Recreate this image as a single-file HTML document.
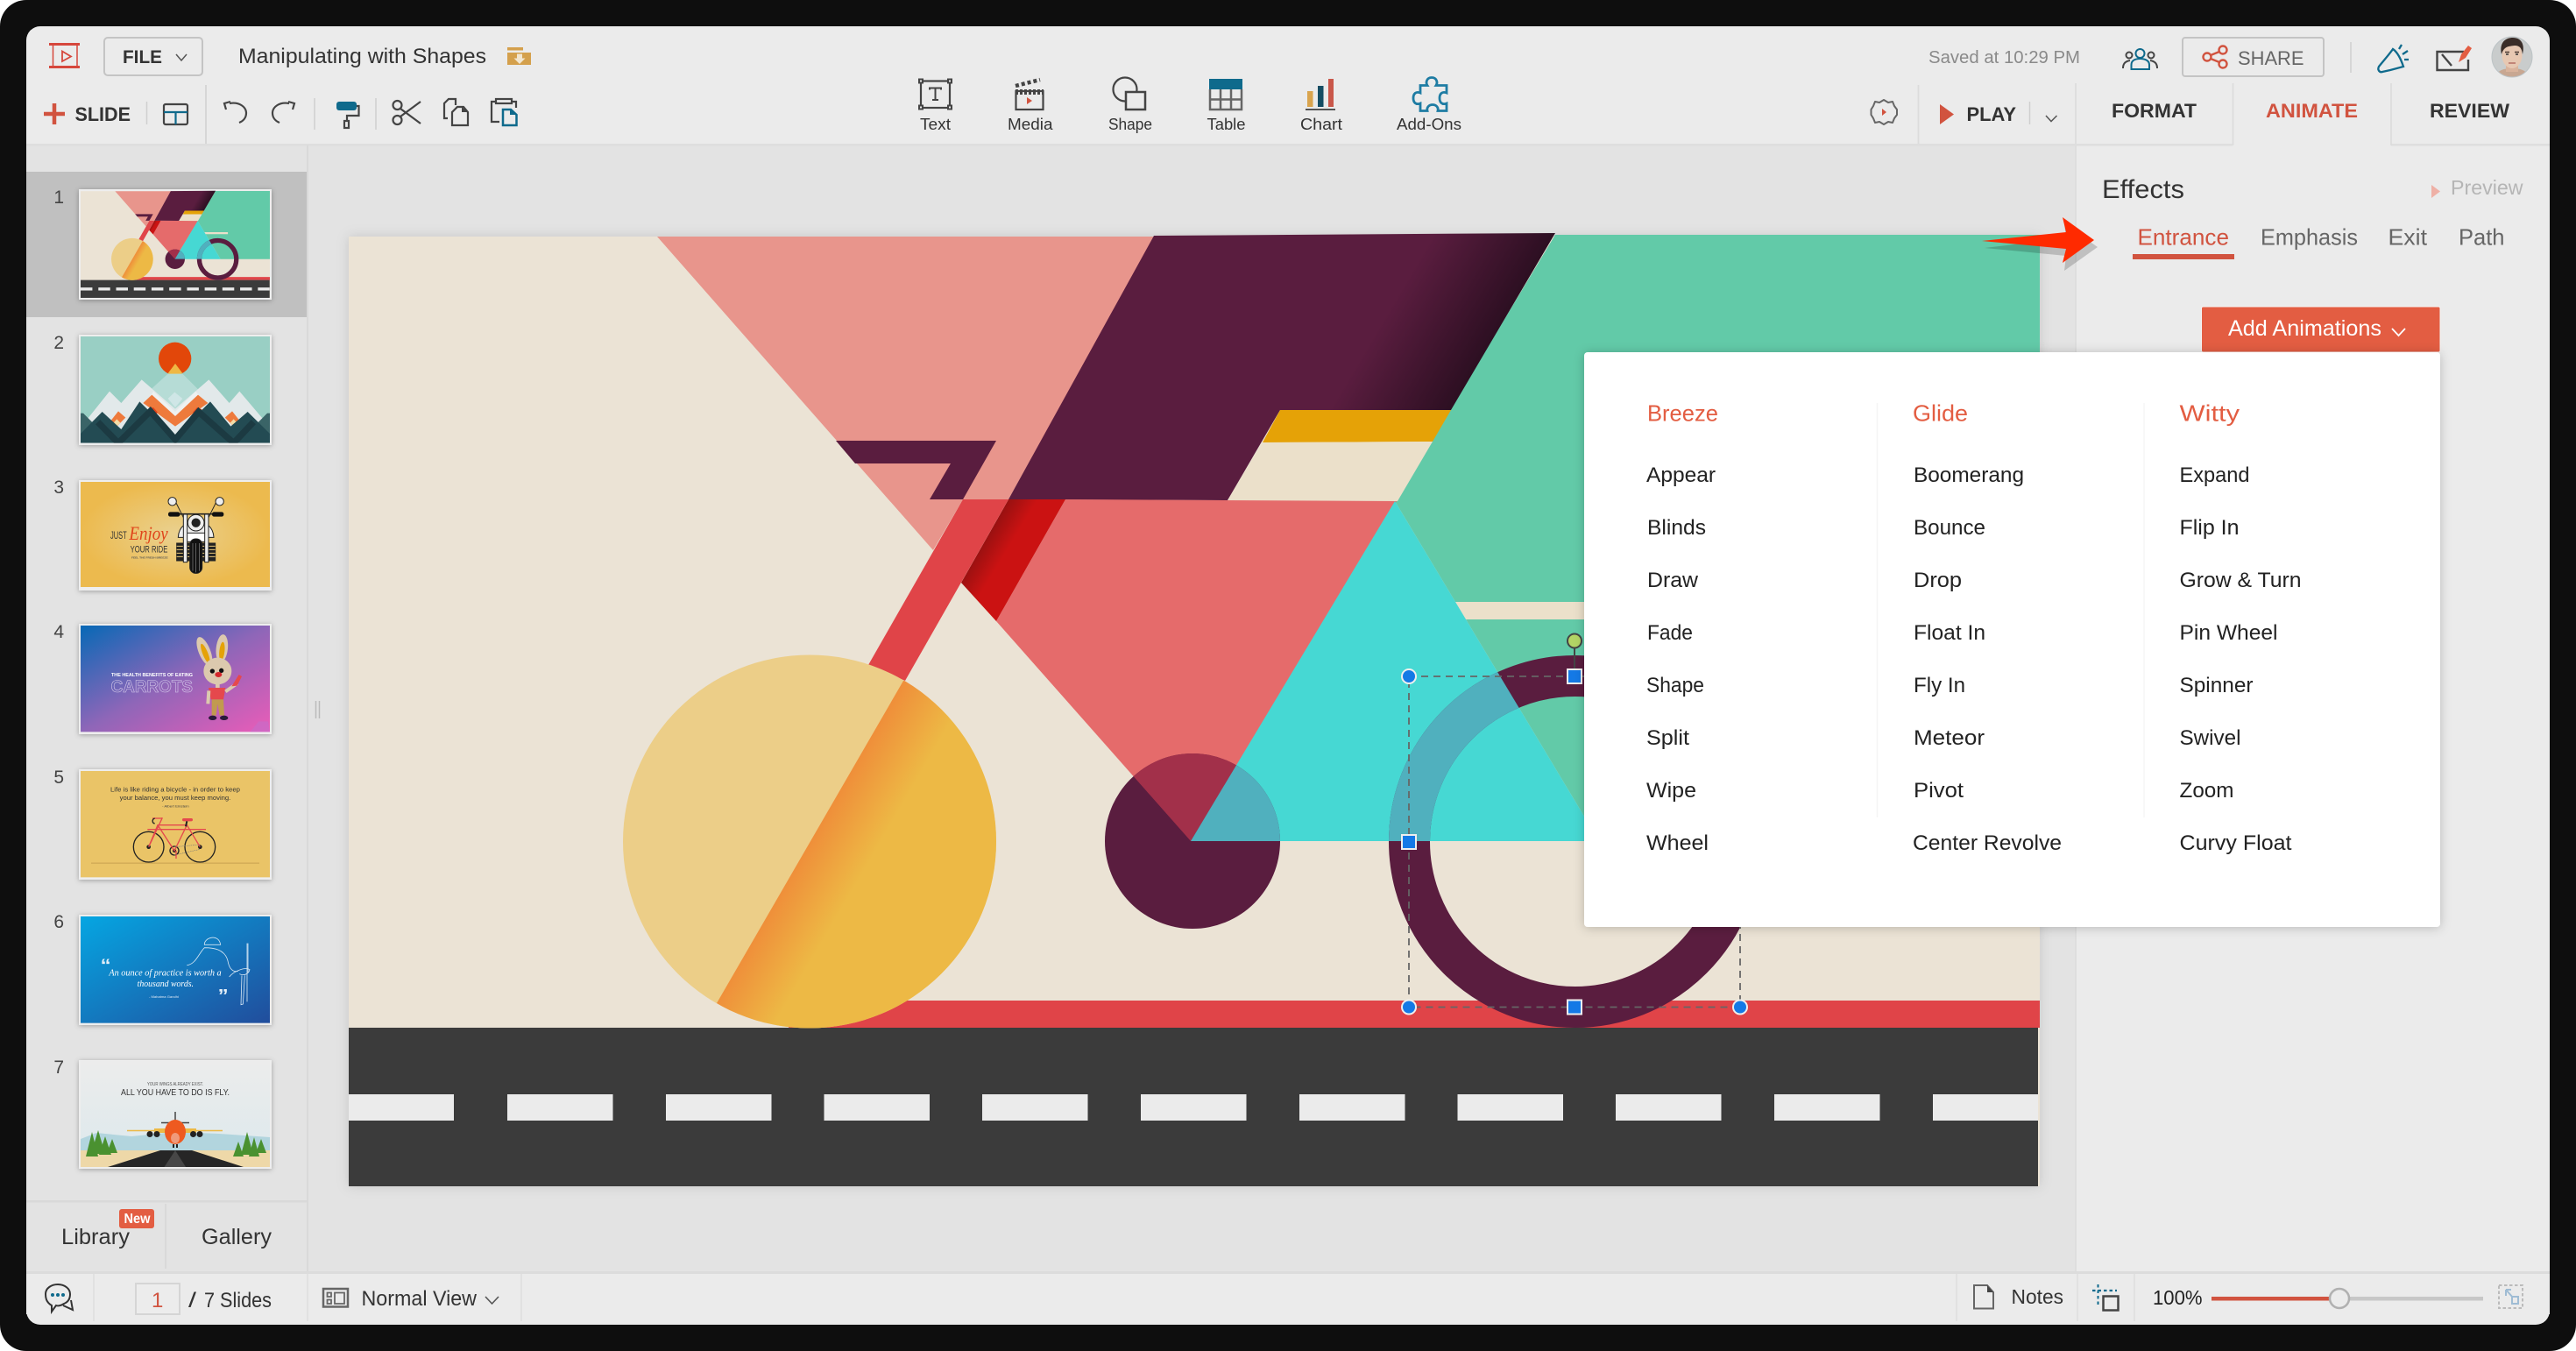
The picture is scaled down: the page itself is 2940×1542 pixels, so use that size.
<!DOCTYPE html>
<html lang="en"><head><meta charset="utf-8"><title>Manipulating with Shapes</title>
<style>
html,body{margin:0;padding:0;background:#fff}
svg{display:block}
text{font-family:"Liberation Sans",sans-serif;fill:#333}
.b{font-weight:700}
.i{font-size:24px;fill:#222}
.h{font-size:26px;fill:#e35d42}
.l{font-size:18px;fill:#333}
.ic{fill:none;stroke:#444;stroke-width:2.2}
</style></head><body>
<svg xmlns="http://www.w3.org/2000/svg" width="2940" height="1542" viewBox="0 0 2940 1542">
<defs>
<filter id="ss" x="-5%" y="-5%" width="110%" height="110%"><feDropShadow dx="0" dy="0" stdDeviation="7" flood-color="#000" flood-opacity=".13"/></filter>
<filter id="ts" x="-10%" y="-10%" width="120%" height="120%"><feDropShadow dx="0" dy="1" stdDeviation="3" flood-color="#000" flood-opacity=".3"/></filter>
<filter id="ps" x="-5%" y="-5%" width="110%" height="110%"><feDropShadow dx="0" dy="1" stdDeviation="6" flood-color="#000" flood-opacity=".22"/></filter>
<linearGradient id="gPlum" gradientUnits="userSpaceOnUse" x1="1635" y1="270" x2="1736" y2="330"><stop offset="0" stop-color="#5a1d3f"/><stop offset="1" stop-color="#2d0f22"/></linearGradient>
<linearGradient id="gRed" gradientUnits="userSpaceOnUse" x1="1097" y1="640" x2="1130" y2="660"><stop offset="0" stop-color="#861010"/><stop offset="1" stop-color="#cb1212"/></linearGradient>
<linearGradient id="gGold" gradientUnits="userSpaceOnUse" x1="925" y1="961" x2="985" y2="996"><stop offset="0" stop-color="#ef8f3a"/><stop offset="1" stop-color="#edb945"/></linearGradient>
<radialGradient id="g3"><stop offset="0" stop-color="#ead190"/><stop offset="1" stop-color="#ecba4e"/></radialGradient>
<linearGradient id="g4" x1="0" y1="0" x2="1" y2="1"><stop offset="0" stop-color="#0668b6"/><stop offset=".5" stop-color="#8e66b8"/><stop offset="1" stop-color="#ea5cb8"/></linearGradient>
<linearGradient id="g6" x1="0" y1="0" x2="1" y2="1"><stop offset="0" stop-color="#05a6e2"/><stop offset="1" stop-color="#214d9c"/></linearGradient>
<linearGradient id="g7" x1="0" y1="0" x2="0" y2="1"><stop offset="0" stop-color="#ececec"/><stop offset="1" stop-color="#dce9ed"/></linearGradient>
<clipPath id="cCy"><polygon points="1592,572 1359,960 1825,960"/></clipPath>
<clipPath id="cCo"><polygon points="1216,570 1594,572 1359,960 1137,709"/></clipPath>
<clipPath id="cBig"><circle cx="924" cy="960.5" r="213"/></clipPath>
<clipPath id="c2"><rect x="276" y="612" width="648" height="365"/></clipPath>
<clipPath id="cSun"><circle cx="599" cy="688" r="56"/></clipPath>
<clipPath id="cAv"><circle cx="2867" cy="65" r="23"/></clipPath>
<clipPath id="c7"><rect x="92" y="1211" width="216" height="121"/></clipPath>
<g id="art">
<rect x="398" y="270" width="1930" height="1084" fill="#ebe3d5"/>
<polygon points="1775,268 2328,268 2328,960 1825,960 1592,572" fill="#62caa8"/>
<polygon points="1640,687 1900,687 1900,707 1640,707" fill="#ebe0ca"/>
<polygon points="750,270 1318,270 1151,570 1099,570 1065,628" fill="#e8958c"/>
<polygon points="1317,269 1775,266 1656,468 1461,468 1401,571 1151,570" fill="url(#gPlum)"/>
<polygon points="1461,468 1656,468 1635,504 1441,505" fill="#e5a207"/>
<polygon points="1441,505 1635,504 1595,572 1401,571" fill="#ebe0ca"/>
<polygon points="954,503 1137,503 1099,570 1061,570 1085,529 976,529" fill="#5a1d3f"/>
<polygon points="1216,570 1594,572 1359,960 1137,709" fill="#e56b6b"/>
<polygon points="1151,570 1216,570 1137,709 1097,665" fill="url(#gRed)"/>
<polygon points="1099,570 1151,570 1033,777 991,759" fill="#e04448"/>
<polygon points="1592,572 1359,960 1825,960" fill="#46d8d3"/>
<rect x="900" y="1142" width="1428" height="31" fill="#e04448"/>
<rect x="398" y="1173" width="1928" height="181" fill="#3b3b3b"/>
<g fill="#ebebeb"><rect x="398" y="1249" width="120" height="30"/><rect x="579" y="1249" width="120.500" height="30"/><rect x="760" y="1249" width="120.500" height="30"/><rect x="940.500" y="1249" width="120.500" height="30"/><rect x="1121" y="1249" width="120.500" height="30"/><rect x="1302" y="1249" width="120.500" height="30"/><rect x="1483" y="1249" width="120.500" height="30"/><rect x="1663.500" y="1249" width="120.500" height="30"/><rect x="1844" y="1249" width="120.500" height="30"/><rect x="2025" y="1249" width="120.500" height="30"/><rect x="2206" y="1249" width="120" height="30"/></g>
<circle cx="924" cy="960.500" r="213" fill="#ecce88"/>
<polygon clip-path="url(#cBig)" points="1031,777 818,1145 1000,1250 1250,1100 1250,777" fill="url(#gGold)"/>
<circle cx="1361" cy="960" r="100" fill="#5a1d3f"/>
<circle cx="1361" cy="960" r="100" fill="#a2304a" clip-path="url(#cCo)"/>
<circle cx="1361" cy="960" r="100" fill="#50b0be" clip-path="url(#cCy)"/>
<circle cx="1797.500" cy="960.500" r="189" fill="none" stroke="#5a1d3f" stroke-width="47"/>
<circle cx="1797.500" cy="960.500" r="189" fill="none" stroke="#50b0be" stroke-width="47" clip-path="url(#cCy)"/>
</g>
</defs>

<rect width="2940" height="1542" rx="30" fill="#0e0e0e"/>
<rect x="30" y="30" width="2880" height="1482" rx="16" fill="#ebebeb"/>
<rect x="30" y="164" width="2339" height="1288" fill="#e3e3e3"/>
<rect x="30" y="164" width="2518" height="2.500" fill="#dedede"/>
<rect x="2729" y="164" width="181" height="2.500" fill="#dedede"/>
<rect x="2368" y="166" width="2" height="1286" fill="#dedede"/>
<rect x="350" y="166" width="2" height="1286" fill="#d9d9d9"/>
<rect x="30" y="1370" width="321" height="2.500" fill="#d9d9d9"/>
<rect x="30" y="1451" width="2880" height="3" fill="#dcdcdc"/>
<rect x="30" y="1454" width="2880" height="46" fill="#ebebeb"/>

<!-- header row -->
<g fill="none" stroke="#d6473c"><path d="M56 50.500H91M56 76.500H91" stroke-width="3"/><path d="M60.500 50V77M88 50V77" stroke-width="1.500"/><path d="M71 58.500L81 64.500L71 70Z" stroke-width="1.800"/></g>
<rect x="119" y="43" width="112" height="43" rx="4" fill="none" stroke="#c4c4c4" stroke-width="2"/>
<text class="b" x="140" y="72" font-size="21" textLength="45" lengthAdjust="spacingAndGlyphs">FILE</text>
<path d="M201 62L207 69L213 62" fill="none" stroke="#555" stroke-width="1.500"/>
<text x="272" y="72" font-size="24" textLength="283" lengthAdjust="spacingAndGlyphs">Manipulating with Shapes</text>
<path d="M579 54H597V57.500H579ZM579 60H606V74H579Z" fill="#d4a04c"/><path d="M590 61.500h6v5h3.500l-6.500 6.500-6.500-6.500h3.500z" fill="#f2e6cf"/>

<!-- second row left -->
<path d="M50 130H74M62 118V142" stroke="#d1533f" stroke-width="4.500"/>
<text class="b" x="85.500" y="138" font-size="22" textLength="63.500" lengthAdjust="spacingAndGlyphs">SLIDE</text>
<path d="M167.500 116V142M235 97V164M359 112V148M429 112V148" stroke="#cfcfcf" stroke-width="1.500"/>
<rect x="187" y="119" width="27" height="23" rx="2" class="ic" stroke-width="2.500"/>
<path d="M187 128H214M200.500 128V142" stroke="#0f6a8c" stroke-width="2.200"/>
<g class="ic"><path d="M262 118C273 116 281 122 281 129C281 134 278 138 273 140"/><path d="M263 116L256 118L258 125"/><path d="M330 118C319 116 311 122 311 129C311 134 314 138 319 140"/><path d="M329 116L336 118L334 125"/></g>
<rect x="384" y="116" width="23" height="10" rx="3" fill="#0f6a8c"/>
<path d="M407 121H409.500V132H396V138" class="ic"/><rect x="393" y="138" width="5" height="8" class="ic"/>
<g class="ic"><circle cx="453.500" cy="120" r="5"/><circle cx="453.500" cy="137" r="5"/><path d="M457 124L480 141M457 133L480 116"/></g>
<g class="ic"><path d="M511 135H507V118L512 113H520V120"/><path d="M522 122H529L534 128V143H516V128Z"/></g><path d="M527 122L534 128H527Z" fill="#444"/>
<g class="ic"><path d="M566 116H561V139H570"/><rect x="566" y="113" width="18" height="5"/><path d="M584 116H589V123"/></g>
<path d="M574 125H583L589.500 131V143H574Z" fill="#ebebeb" stroke="#0f6a8c" stroke-width="2.500"/><path d="M582 125L589 131H582Z" fill="#0f6a8c"/>

<!-- center tools -->
<g class="ic" stroke-width="2.500"><rect x="1051" y="92.500" width="33" height="30.500"/></g>
<g fill="#ebebeb" stroke="#444" stroke-width="2"><rect x="1049" y="90.500" width="4" height="4"/><rect x="1082" y="90.500" width="4" height="4"/><rect x="1049" y="120.500" width="4" height="4"/><rect x="1082" y="120.500" width="4" height="4"/></g>
<path d="M1061 102.500V100.500H1074V102.500M1067.500 100.500V114M1064 114H1071" fill="none" stroke="#444" stroke-width="2"/>
<text class="l" x="1050" y="148" textLength="35" lengthAdjust="spacingAndGlyphs">Text</text>
<rect x="1159.500" y="104" width="31" height="21" class="ic" stroke-width="2.500"/>
<path d="M1159 98L1187 91" stroke="#444" stroke-width="4.500" stroke-dasharray="4 3"/>
<path d="M1159 105H1191" stroke="#444" stroke-width="6" stroke-dasharray="3 2"/>
<polygon points="1172,111 1178,115 1172,119" fill="#d1533f"/>
<text class="l" x="1150" y="148" textLength="51.500" lengthAdjust="spacingAndGlyphs">Media</text>
<circle cx="1284" cy="102" r="13.500" class="ic" stroke-width="2.500"/>
<rect x="1285" y="105" width="22" height="20" fill="#ebebeb" stroke="#444" stroke-width="2.500"/>
<text class="l" x="1265" y="148" textLength="50" lengthAdjust="spacingAndGlyphs">Shape</text>
<rect x="1380" y="90" width="38" height="12" fill="#0f6a8c"/>
<path d="M1381 102V125H1417V102M1393 102V125M1405 102V125M1381 113.500H1417" fill="none" stroke="#666" stroke-width="2.500"/>
<text class="l" x="1377.500" y="148" textLength="44" lengthAdjust="spacingAndGlyphs">Table</text>
<rect x="1492" y="104" width="6.500" height="18" fill="#d9a44e"/><rect x="1504" y="98" width="6.500" height="24" fill="#154d63"/><rect x="1516" y="90" width="6" height="32" fill="#c9574a"/><rect x="1490" y="124" width="34" height="2" fill="#555"/>
<text class="l" x="1484" y="148" textLength="48" lengthAdjust="spacingAndGlyphs">Chart</text>
<path d="M1621 97.500H1629c-2-3-1-9 5-9s7 6 5 9H1651V106c-5-2-8 1-8 6s3 8 8 6V126.500H1641c1-4-2-7-6-7s-7 3-6 7H1621V118c-5 2-8-1-8-6s3-8 8-6Z" fill="none" stroke="#1e7ca3" stroke-width="2.800"/>
<text class="l" x="1594" y="148" textLength="74" lengthAdjust="spacingAndGlyphs">Add-Ons</text>

<!-- right header -->
<text x="2201" y="72" font-size="20" fill="#8a8a8a" style="fill:#8a8a8a" textLength="173" lengthAdjust="spacingAndGlyphs">Saved at 10:29 PM</text>
<g fill="none" stroke-width="2"><circle cx="2442.500" cy="61" r="5" stroke="#0f6a8c"/><path d="M2432.500 79H2453V74C2453 69 2448 67 2442.500 67C2437 67 2432.500 69 2432.500 74Z" stroke="#0f6a8c"/><circle cx="2430" cy="63" r="3.500" stroke="#444"/><circle cx="2455" cy="63" r="3.500" stroke="#444"/><path d="M2423 78C2423 72 2426 70 2431 69M2462 78C2462 72 2459 70 2454 69" stroke="#444"/></g>
<rect x="2491" y="43" width="161" height="44" rx="3" fill="none" stroke="#c4c4c4" stroke-width="2"/>
<g fill="none" stroke="#d1533f" stroke-width="2.400"><circle cx="2519" cy="65" r="4.500"/><circle cx="2537" cy="57" r="4.500"/><circle cx="2537" cy="73" r="4.500"/><path d="M2523 63L2533 59M2523 67L2533 71"/></g>
<text x="2554" y="74" font-size="22" style="fill:#666" textLength="75.500" lengthAdjust="spacingAndGlyphs">SHARE</text>
<path d="M2683 48V83" stroke="#cfcfcf" stroke-width="1.500"/>
<g fill="none" stroke="#0f6a8c" stroke-width="2.300"><path d="M2731 56C2727 62 2718 72 2715 76C2713 80 2716 83 2719 82L2728 80L2743 76C2741 70 2737 60 2731 56Z"/><path d="M2738 56L2741 51M2742 62L2748 58M2744 68L2749 68"/></g>
<path d="M2812 59H2781.500V80H2817V68M2787 62L2798 75" fill="none" stroke="#444" stroke-width="2.400"/>
<polygon points="2817,52 2821,55 2814,66 2806,71 2809,62" fill="#e35d42"/>
<g clip-path="url(#cAv)"><rect x="2844" y="42" width="46" height="46" fill="#c9cccc"/><path d="M2848 88C2850 80 2858 78 2867 78C2876 78 2884 80 2886 88Z" fill="#c8a792"/><rect x="2860" y="70" width="14" height="12" fill="#d9b39c"/><ellipse cx="2867" cy="63" rx="11.500" ry="15" fill="#e7c8b2"/><path d="M2855 62C2852 48 2860 43 2868 43C2877 43 2882 50 2879 62C2878 55 2876 52 2870 52C2864 53 2858 52 2855 62Z" fill="#3a2d28"/><path d="M2859 59.500h5M2870 59.500h5" stroke="#4a3a32" stroke-width="1.500"/><path d="M2860 62h3M2871 62h3" stroke="#333" stroke-width="1.600"/><path d="M2863 72h8" stroke="#b56f64" stroke-width="1.500"/></g>
<circle cx="2867" cy="65" r="23" fill="none" stroke="#bcc3c6" stroke-width="1"/>

<!-- second row right -->
<path d="M2150 114L2155 117L2160 116L2162 121L2165 125L2165 131L2162 135L2160 140L2155 139L2150 142L2145 139L2140 140L2138 135L2135.500 131L2135.500 125L2138 121L2140 116L2145 117Z" fill="none" stroke="#666" stroke-width="2" stroke-linejoin="round"/><polygon points="2148,124 2153,128 2148,132" fill="#d1533f"/>
<path d="M2189.500 97V164M2369 95V164M2548.500 95V166M2729 95V166" stroke="#dcdcdc" stroke-width="1.800"/>
<polygon points="2214,119 2230,130.500 2214,142" fill="#d1533f"/>
<text class="b" x="2244.500" y="138" font-size="22" textLength="56.500" lengthAdjust="spacingAndGlyphs">PLAY</text>
<path d="M2316.500 116V142" stroke="#cfcfcf" stroke-width="1.500"/>
<path d="M2335 132L2341 138.500L2347.500 132" fill="none" stroke="#555" stroke-width="1.500"/>
<text class="b" x="2410" y="134" font-size="22" textLength="97" lengthAdjust="spacingAndGlyphs">FORMAT</text>
<text class="b" x="2586" y="134" font-size="22" style="fill:#d1533f" textLength="105" lengthAdjust="spacingAndGlyphs">ANIMATE</text>
<text class="b" x="2773" y="134" font-size="22" textLength="91" lengthAdjust="spacingAndGlyphs">REVIEW</text>

<!-- effects panel -->
<text x="2399" y="226" font-size="30" textLength="94" lengthAdjust="spacingAndGlyphs">Effects</text>
<polygon points="2775,211 2785,218.500 2775,226" fill="#eeb0a6"/>
<text x="2797" y="222" font-size="23" style="fill:#b5b5b5" textLength="82.500" lengthAdjust="spacingAndGlyphs">Preview</text>
<text x="2439.500" y="279.500" font-size="26" style="fill:#d1533f" textLength="104.500" lengthAdjust="spacingAndGlyphs">Entrance</text>
<rect x="2434" y="290" width="116" height="6" fill="#d1533f"/>
<text x="2580" y="279.500" font-size="26" style="fill:#666" textLength="111" lengthAdjust="spacingAndGlyphs">Emphasis</text>
<text x="2725.500" y="279.500" font-size="26" style="fill:#666" textLength="44.500" lengthAdjust="spacingAndGlyphs">Exit</text>
<text x="2806" y="279.500" font-size="26" style="fill:#666" textLength="52.500" lengthAdjust="spacingAndGlyphs">Path</text>

<!-- slide -->
<rect x="398" y="270" width="1930" height="1084" fill="#000" filter="url(#ss)"/>
<use href="#art"/>
<path d="M360.500 800V820M364.500 800V820" stroke="#bbb" stroke-width="1.500"/>

<!-- selection -->
<rect x="1608" y="772" width="378" height="377.500" fill="none" stroke="#666" stroke-width="1.800" stroke-dasharray="8 6"/>
<path d="M1797 740V772" stroke="#444" stroke-width="2"/>
<circle cx="1797" cy="731.500" r="8" fill="#b3d465" stroke="#444" stroke-width="2"/>
<g fill="#1479e6" stroke="#eee" stroke-width="2"><circle cx="1608" cy="772" r="8"/><circle cx="1608" cy="1149.500" r="8"/><circle cx="1986" cy="1149.500" r="8"/><rect x="1789" y="764" width="16" height="16"/><rect x="1600" y="953" width="16" height="16"/><rect x="1789" y="1141.500" width="16" height="16"/></g>

<!-- arrow -->
<polygon points="2265,283 2358,272 2356,255 2394,282 2356,309 2358,292" fill="#000" opacity=".18"/>
<polygon points="2262,275 2358,265 2354,248 2390,274 2354,300 2358,284" fill="#ff2a00"/>

<!-- Add Animations -->
<rect x="2512.500" y="350" width="272.500" height="52" rx="2" fill="#e35d42" stroke="#f6f6f6" stroke-width="1"/>
<text x="2543" y="383" font-size="25" style="fill:#fff" textLength="175" lengthAdjust="spacingAndGlyphs">Add Animations</text>
<path d="M2730 375L2737.500 383L2745 375" fill="none" stroke="#fff" stroke-width="1.800"/>

<!-- popup -->
<rect x="1808" y="402" width="977" height="656" rx="4" fill="#fff" filter="url(#ps)"/>
<path d="M2142.500 460V933M2447 460V933" stroke="#f5f5f5" stroke-width="1.500"/>
<text class="h" x="1880" y="480.500" textLength="81" lengthAdjust="spacingAndGlyphs">Breeze</text>
<text class="h" x="2183" y="480.500" textLength="63" lengthAdjust="spacingAndGlyphs">Glide</text>
<text class="h" x="2487.500" y="480.500" textLength="68.500" lengthAdjust="spacingAndGlyphs">Witty</text>
<text class="i" x="1879" y="550" textLength="79" lengthAdjust="spacingAndGlyphs">Appear</text>
<text class="i" x="1880" y="610" textLength="67" lengthAdjust="spacingAndGlyphs">Blinds</text>
<text class="i" x="1880" y="670" textLength="58" lengthAdjust="spacingAndGlyphs">Draw</text>
<text class="i" x="1880" y="730" textLength="52" lengthAdjust="spacingAndGlyphs">Fade</text>
<text class="i" x="1879" y="790" textLength="66" lengthAdjust="spacingAndGlyphs">Shape</text>
<text class="i" x="1879" y="850" textLength="49" lengthAdjust="spacingAndGlyphs">Split</text>
<text class="i" x="1879" y="910" textLength="57" lengthAdjust="spacingAndGlyphs">Wipe</text>
<text class="i" x="1879" y="970" textLength="71" lengthAdjust="spacingAndGlyphs">Wheel</text>
<text class="i" x="2184" y="550" textLength="126" lengthAdjust="spacingAndGlyphs">Boomerang</text>
<text class="i" x="2184" y="610" textLength="82" lengthAdjust="spacingAndGlyphs">Bounce</text>
<text class="i" x="2184" y="670" textLength="55" lengthAdjust="spacingAndGlyphs">Drop</text>
<text class="i" x="2184" y="730" textLength="82" lengthAdjust="spacingAndGlyphs">Float In</text>
<text class="i" x="2184" y="790" textLength="59" lengthAdjust="spacingAndGlyphs">Fly In</text>
<text class="i" x="2184" y="850" textLength="81" lengthAdjust="spacingAndGlyphs">Meteor</text>
<text class="i" x="2184" y="910" textLength="57" lengthAdjust="spacingAndGlyphs">Pivot</text>
<text class="i" x="2183" y="970" textLength="170" lengthAdjust="spacingAndGlyphs">Center Revolve</text>
<text class="i" x="2487.500" y="550" textLength="80" lengthAdjust="spacingAndGlyphs">Expand</text>
<text class="i" x="2487.500" y="610" textLength="68" lengthAdjust="spacingAndGlyphs">Flip In</text>
<text class="i" x="2487.500" y="670" textLength="139" lengthAdjust="spacingAndGlyphs">Grow &amp; Turn</text>
<text class="i" x="2487.500" y="730" textLength="112" lengthAdjust="spacingAndGlyphs">Pin Wheel</text>
<text class="i" x="2487.500" y="790" textLength="84" lengthAdjust="spacingAndGlyphs">Spinner</text>
<text class="i" x="2487.500" y="850" textLength="70" lengthAdjust="spacingAndGlyphs">Swivel</text>
<text class="i" x="2487.500" y="910" textLength="62" lengthAdjust="spacingAndGlyphs">Zoom</text>
<text class="i" x="2487.500" y="970" textLength="128" lengthAdjust="spacingAndGlyphs">Curvy Float</text>

<!-- sidebar -->
<rect x="30" y="196" width="320" height="166" fill="#c0c0c0"/>
<g font-size="21" text-anchor="end" style="fill:#444">
<text x="73" y="232" style="fill:#444">1</text><text x="73" y="398" style="fill:#444">2</text><text x="73" y="563" style="fill:#444">3</text><text x="73" y="728" style="fill:#444">4</text><text x="73" y="894" style="fill:#444">5</text><text x="73" y="1059" style="fill:#444">6</text><text x="73" y="1225" style="fill:#444">7</text>
</g>
<g fill="#eee" filter="url(#ts)"><rect x="90" y="216" width="220" height="126"/><rect x="90" y="382" width="220" height="126"/><rect x="90" y="548" width="220" height="126"/><rect x="90" y="712" width="220" height="126"/><rect x="90" y="878" width="220" height="126"/><rect x="90" y="1044" width="220" height="126"/><rect x="90" y="1210" width="220" height="124"/></g>

<!-- thumb 1 -->
<g transform="translate(92,218) scale(.1119,.1123) translate(-398,-268)"><use href="#art"/></g>

<!-- thumb 2 -->
<g transform="translate(0,180) scale(.33333)">
<g clip-path="url(#c2)">
<rect x="276" y="612" width="648" height="365" fill="#99cfc4"/>
<circle cx="599" cy="688" r="56" fill="#e2470a"/>
<polygon clip-path="url(#cSun)" points="570,745 600,705 630,745" fill="#efb844"/>
<polygon points="520,790 575,740 625,740 685,800 600,860" fill="#b6dcd6"/>
<polygon points="295,900 375,800 415,840 485,760 600,860 715,760 785,840 820,800 905,900 905,977 295,977" fill="#e2e9ea"/>
<polygon points="525,800 600,870 670,800 690,825 600,900 510,825" fill="#eef1f1"/>
<polygon points="575,825 598,803 625,825 600,855" fill="#cfe6e6"/>
<polygon points="490,840 520,812 600,885 678,812 712,840 600,920" fill="#ee7a3c"/>
<polygon points="510,860 525,855 540,872 525,888" fill="#e0451b"/><polygon points="660,872 675,855 692,862 675,888" fill="#e0451b"/>
<polygon points="368,915 405,868 430,890 390,930" fill="#ee7a3c"/><polygon points="378,920 400,895 412,908 388,930" fill="#f4dca6"/>
<polygon points="770,890 795,868 832,915 810,930" fill="#ee7a3c"/><polygon points="788,908 800,895 822,920 812,930" fill="#f4dca6"/>
<polygon points="276,875 285,875 320,910 276,950" fill="#3a6467"/><polygon points="924,875 915,875 880,910 924,950" fill="#3a6467"/>
<polygon points="276,977 276,945 350,870 415,930 478,835 600,955 720,835 790,920 848,870 924,945 924,977" fill="#234b53"/>
<polyline points="335,905 405,977 515,868 600,965 680,870 800,977 868,905" fill="none" stroke="#1c3a42" stroke-width="22"/>
</g></g>

<!-- thumb 3 -->
<g transform="translate(0,180) scale(.33333)">
<rect x="276" y="1110" width="648" height="360" fill="url(#g3)"/>
<text x="378" y="1305" font-size="36" style="fill:#333" textLength="56" lengthAdjust="spacingAndGlyphs">JUST</text>
<text x="442" y="1308" font-size="66" font-style="italic" style="fill:#e0451b;font-family:'Liberation Serif',serif" textLength="133" lengthAdjust="spacingAndGlyphs">Enjoy</text>
<text x="446" y="1352" font-size="32" style="fill:#333" textLength="128" lengthAdjust="spacingAndGlyphs">YOUR RIDE</text>
<text x="450" y="1373" font-size="9" font-weight="700" style="fill:#555" textLength="125" lengthAdjust="spacingAndGlyphs">FEEL THE FRESH BREEZE</text>
<g stroke="#222" stroke-width="3">
<path d="M602 1180L632 1240M740 1180L710 1240" fill="none"/><circle cx="590" cy="1177" r="14" fill="#eee"/><circle cx="752" cy="1177" r="14" fill="#eee"/>
<rect x="605" y="1320" width="132" height="60" fill="#222"/>
<path d="M605 1330h132M605 1342h132M605 1354h132M605 1366h132" stroke="#e8c678" stroke-width="3"/>
<path d="M610 1300C612 1262 640 1245 671 1245C702 1245 730 1262 732 1300Z" fill="#eee"/>
<rect x="640" y="1285" width="62" height="30" fill="#fff"/>
<rect x="650" y="1305" width="42" height="118" rx="20" fill="#111"/>
<path d="M660 1320V1415M671 1320V1420M682 1320V1415" stroke="#888" stroke-width="2"/>
<rect x="628" y="1220" width="13" height="165" fill="#eee"/><rect x="701" y="1220" width="13" height="165" fill="#eee"/>
<circle cx="671" cy="1250" r="28" fill="#eee"/><circle cx="671" cy="1250" r="14" fill="#222"/>
<path d="M590 1220H740" stroke-width="5"/>
</g>
<rect x="576" y="1213" width="40" height="16" rx="7" fill="#111"/><rect x="726" y="1213" width="40" height="16" rx="7" fill="#111"/>
</g>

<!-- thumb 4 -->
<g transform="translate(0,680) scale(.33333)">
<rect x="276" y="102" width="648" height="364" fill="url(#g4)"/>
<text x="381" y="276" font-size="17" font-weight="700" style="fill:#fff" textLength="279" lengthAdjust="spacingAndGlyphs">THE HEALTH BENEFITS OF EATING</text>
<text x="380" y="330" font-size="58" font-weight="700" style="fill:none;stroke:#d5c8ea;stroke-width:1.800" textLength="280" lengthAdjust="spacingAndGlyphs">CARROTS</text>
<ellipse cx="700" cy="190" rx="20" ry="52" fill="#dcc9ae" transform="rotate(-22 700 190)"/><ellipse cx="760" cy="180" rx="20" ry="48" fill="#dcc9ae" transform="rotate(6 760 180)"/>
<ellipse cx="703" cy="198" rx="9" ry="36" fill="#e5a207" transform="rotate(-22 703 198)"/><ellipse cx="760" cy="190" rx="9" ry="32" fill="#e5a207" transform="rotate(6 760 190)"/>
<ellipse cx="745" cy="258" rx="48" ry="46" fill="#dcc9ae"/>
<circle cx="727" cy="258" r="8" fill="#111"/><circle cx="758" cy="256" r="8" fill="#111"/><ellipse cx="748" cy="270" rx="12" ry="9" fill="#d3272c"/>
<rect x="738" y="295" width="14" height="25" fill="#dcc9ae"/>
<path d="M714 315H772L765 355H722Z" fill="#e5484d"/>
<path d="M725 355H765L768 410H752L745 370L740 410H725Z" fill="#c19a4f"/>
<ellipse cx="728" cy="418" rx="14" ry="8" fill="#2a1a3a"/><ellipse cx="767" cy="418" rx="14" ry="8" fill="#2a1a3a"/>
<path d="M772 328L812 300" stroke="#dcc9ae" stroke-width="12"/>
<path d="M793 310L818 270L828 276L812 308Z" fill="#e5484d"/>
<path d="M715 325L712 370" stroke="#dcc9ae" stroke-width="12"/>
<polygon points="856,466 886,430 918,430 924,466" fill="#c86cc8" opacity=".7"/>
</g>

<!-- thumb 5 -->
<g transform="translate(0,680) scale(.33333)">
<rect x="276" y="600" width="648" height="364" fill="#eac467"/>
<text x="378" y="671" font-size="21" style="fill:#333" textLength="444" lengthAdjust="spacingAndGlyphs">Life is like riding a bicycle - in order to keep</text>
<text x="410" y="699" font-size="21" style="fill:#333" textLength="380" lengthAdjust="spacingAndGlyphs">your balance, you must keep moving.</text>
<text x="555" y="725" font-size="10" style="fill:#444" textLength="92" lengthAdjust="spacingAndGlyphs">- Albert Einstein</text>
<path d="M312 915.500H888" stroke="#c8a050" stroke-width="3"/>
<g fill="none" stroke="#222" stroke-width="4"><circle cx="509" cy="860" r="52"/><circle cx="685" cy="860" r="52"/><circle cx="597" cy="873" r="15"/></g>
<circle cx="509" cy="860" r="7" fill="#222"/><circle cx="685" cy="860" r="7" fill="#222"/><circle cx="597" cy="873" r="6" fill="#222"/>
<g fill="none" stroke="#e5484d" stroke-width="4"><path d="M509 860L540 785H640L597 873L540 785M640 785L685 860M556 760L509 860M505 800H705M603 873V900"/><path d="M522 762H556"/></g>
<rect x="624" y="762" width="36" height="10" rx="5" fill="#e5484d"/><path d="M640 772L636 790" stroke="#222" stroke-width="6"/>
<path d="M530 762C520 765 520 778 530 780" fill="none" stroke="#222" stroke-width="4"/>
<path d="M597 860L685 852M597 888L685 868" stroke="#777" stroke-width="2" stroke-dasharray="4 3"/>
</g>

<!-- thumb 6 -->
<g transform="translate(0,680) scale(.33333)">
<rect x="276" y="1098" width="648" height="365" fill="url(#g6)"/>
<text x="344" y="1286" font-size="60" font-weight="700" style="fill:#e6f0f8" textLength="36" lengthAdjust="spacingAndGlyphs">“</text>
<text x="746" y="1389" font-size="60" font-weight="700" style="fill:#e6f0f8" textLength="36" lengthAdjust="spacingAndGlyphs">”</text>
<g style="font-family:'Liberation Serif',serif" font-style="italic" font-size="30">
<text x="373" y="1300" style="fill:#fff;font-family:'Liberation Serif',serif" textLength="385" lengthAdjust="spacingAndGlyphs">An ounce of practice is worth a</text>
<text x="470" y="1338" style="fill:#fff;font-family:'Liberation Serif',serif" textLength="193" lengthAdjust="spacingAndGlyphs">thousand words.</text></g>
<text x="510" y="1377" font-size="10" style="fill:#dce8f4" textLength="102" lengthAdjust="spacingAndGlyphs">- Mahatma Gandhi</text>
<g fill="none" stroke="#d5e6f4" stroke-width="2.500"><path d="M700 1195C698 1170 750 1155 755 1195Z"/><path d="M640 1265C670 1262 680 1225 700 1205C730 1205 770 1210 780 1250C785 1280 800 1290 815 1285"/><path d="M846 1190V1390M849 1190V1290"/><path d="M828 1300L825 1400L832 1398L838 1300"/><path d="M785 1305C800 1285 840 1270 855 1280C850 1300 830 1300 820 1295"/></g>
</g>

<!-- thumb 7 -->
<g clip-path="url(#c7)">
<rect x="92" y="1211" width="216" height="121" fill="url(#g7)"/>
<text x="168" y="1239" font-size="5.500" style="fill:#555" textLength="64" lengthAdjust="spacingAndGlyphs">YOUR WINGS ALREADY EXIST.</text>
<text x="138" y="1250" font-size="10.500" style="fill:#333" textLength="124" lengthAdjust="spacingAndGlyphs">ALL YOU HAVE TO DO IS FLY.</text>
<path d="M92 1300L110 1293L150 1297L200 1292L250 1294L308 1298V1314H92Z" fill="#b2d5de"/>
<rect x="92" y="1313" width="216" height="19" fill="#eed8a8"/>
<polygon points="123,1332 278,1332 219,1313 183,1313" fill="#262626"/>
<polygon points="187.500,1332 212,1332 200,1313" fill="#474747"/>
<g fill="#4a9130"><polygon points="105,1320 98,1320 105,1292 112,1320"/><polygon points="112,1317 104,1317 112,1290 120,1317"/><polygon points="120,1318 113,1318 120,1297 127,1318"/><polygon points="128,1316 122,1316 128,1300 134,1316"/><polygon points="272,1320 266,1320 272,1303 278,1320"/><polygon points="282,1318 275,1318 282,1292 289,1318"/><polygon points="290,1320 284,1320 290,1298 296,1320"/><polygon points="298,1316 292,1316 298,1300 304,1316"/></g>
<path d="M145 1290.500H254" stroke="#edb945" stroke-width="1.500"/><rect x="176" y="1288" width="48" height="5" fill="#edb945"/>
<path d="M200 1269V1282M184 1281.500H216" stroke="#444" stroke-width="1.500"/>
<g fill="#222"><circle cx="171" cy="1294.500" r="3.500"/><circle cx="179" cy="1294.500" r="3.500"/><circle cx="220.500" cy="1294.500" r="3.500"/><circle cx="228" cy="1294.500" r="3.500"/><rect x="197" y="1306" width="2" height="4"/><rect x="201" y="1306" width="2" height="4"/></g>
<ellipse cx="200" cy="1292" rx="12" ry="14" fill="#ee5a20"/><ellipse cx="200" cy="1299" rx="5" ry="6" fill="#f09a7a"/>
</g>

<!-- sidebar bottom -->
<path d="M189 1374V1448" stroke="#d9d9d9" stroke-width="2"/>
<text x="70" y="1420" font-size="25" textLength="78" lengthAdjust="spacingAndGlyphs">Library</text>
<text x="230" y="1420" font-size="25" textLength="80" lengthAdjust="spacingAndGlyphs">Gallery</text>
<rect x="136" y="1380" width="40" height="22" rx="3" fill="#e35d42"/>
<text x="141.500" y="1396" font-size="16" font-weight="700" style="fill:#fff" textLength="30" lengthAdjust="spacingAndGlyphs">New</text>

<!-- status bar -->
<path d="M107 1454V1508M351 1454V1508M595 1454V1508M2233 1454V1508M2371 1454V1508M2436 1454V1508" stroke="#e0e0e0" stroke-width="1.800"/>
<g fill="none" stroke="#333" stroke-width="2"><path d="M59 1490C52 1486 52 1480 52 1477C52 1470 59 1466 66 1466C74 1466 80 1471 80 1477C80 1482 78 1486 73 1488C70 1490 66 1491 64 1490L59 1497Z"/><path d="M72 1490L83 1495L81 1484"/></g>
<g fill="#0f6a8c"><circle cx="60" cy="1478" r="2"/><circle cx="66" cy="1478" r="2"/><circle cx="72" cy="1478" r="2"/></g>
<rect x="155" y="1465" width="50" height="35" fill="#ececec" stroke="#d5d5d5" stroke-width="2"/>
<text x="173" y="1492" font-size="24" style="fill:#d1533f">1</text>
<text x="215" y="1492" font-size="24" textLength="9" lengthAdjust="spacingAndGlyphs">/</text>
<text x="233" y="1492" font-size="24" textLength="77" lengthAdjust="spacingAndGlyphs">7 Slides</text>
<rect x="369" y="1471" width="28" height="20.500" fill="none" stroke="#666" stroke-width="2.500"/>
<path d="M373.500 1475.500h4.500v4.500h-4.500zM373.500 1483.500h4.500v4.500h-4.500zM382 1475.500h11v12.500h-11z" fill="none" stroke="#666" stroke-width="1.800"/>
<text x="412.500" y="1490" font-size="24" textLength="131.500" lengthAdjust="spacingAndGlyphs">Normal View</text>
<path d="M554 1480L561.500 1488L569 1480" fill="none" stroke="#555" stroke-width="1.600"/>
<path d="M2253 1467H2268L2275 1475V1493.500H2253Z" fill="none" stroke="#666" stroke-width="2"/><polygon points="2268,1467 2275,1475 2268,1475" fill="#444"/>
<text x="2295.500" y="1488" font-size="23" textLength="59.500" lengthAdjust="spacingAndGlyphs">Notes</text>
<path d="M2394.500 1466V1492" stroke="#0f6a8c" stroke-width="2" stroke-dasharray="3.500 3"/><path d="M2388 1473H2416" stroke="#0f6a8c" stroke-width="2.200" stroke-dasharray="3.500 3"/>
<rect x="2400.500" y="1479.500" width="17" height="16" fill="none" stroke="#444" stroke-width="2.500"/>
<text x="2457" y="1489" font-size="23" style="fill:#222" textLength="56.500" lengthAdjust="spacingAndGlyphs">100%</text>
<rect x="2524" y="1480" width="136" height="4.500" fill="#d1533f"/><rect x="2660" y="1480" width="174" height="4.500" fill="#c7c7c7"/>
<circle cx="2670" cy="1482" r="11" fill="#ebebeb" stroke="#b0b0b0" stroke-width="2.500"/>
<rect x="2852" y="1467" width="27" height="26" fill="none" stroke="#bbb" stroke-width="2" stroke-dasharray="3.500 2.500"/>
<path d="M2860 1472H2866M2860 1472V1479M2860 1472L2868 1481" fill="none" stroke="#9fbcd4" stroke-width="2"/>
<rect x="2867" y="1480" width="7" height="8" fill="none" stroke="#9fbcd4" stroke-width="2"/>
</svg>
</body></html>
